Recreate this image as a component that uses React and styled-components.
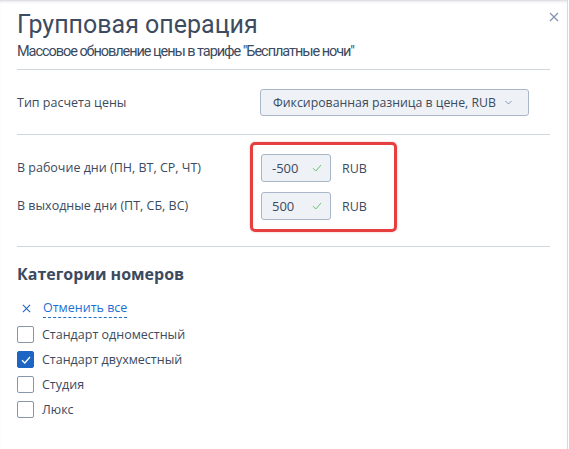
import React from "react";
import styled, { createGlobalStyle } from "styled-components";

const GlobalStyle = createGlobalStyle`
  html, body {
    margin: 0;
    padding: 0;
    background: #ffffff;
  }
  body {
    font-family: "Open Sans", "Noto Sans", sans-serif;
    color: #3b4a5e;
  }
`;

const Modal = styled.div`
  position: relative;
  width: 568px;
  min-height: 449px;
  box-sizing: border-box;
  background: #fff;
  border-right: 1px solid #d3dae4;
  box-shadow: inset 0 3px 3px -2px rgba(60, 70, 90, 0.25);
`;

const Header = styled.div`
  padding: 10px 17px 0 17px;
`;

const Title = styled.h1`
  margin: 0;
  font-family: Roboto, "Liberation Sans", sans-serif;
  font-weight: 400;
  font-size: 25px;
  line-height: 30px;
  color: #3d4b60;
`;

const Subtitle = styled.div`
  margin-top: 2px;
  font-family: Roboto, "Liberation Sans", sans-serif;
  font-size: 14.5px;
  letter-spacing: -1.05px;
  line-height: 20px;
  color: #3b4a5e;
`;

const Close = styled.button`
  position: absolute;
  top: 9px;
  right: 5px;
  width: 16px;
  height: 16px;
  padding: 0;
  border: 0;
  background: none;
  cursor: pointer;
  display: flex;
  align-items: center;
  justify-content: center;
`;

const Divider = styled.hr`
  margin: ${(p) => p.$top || 0}px 17px 0 17px;
  border: 0;
  border-top: 1px solid #cfd6e0;
`;

const Section = styled.div`
  position: relative;
  display: grid;
  grid-template-columns: 243px 1fr;
  row-gap: 10px;
  align-items: center;
  padding: ${(p) => p.$pad};
`;

const Label = styled.div`
  font-size: 12.5px;
  line-height: 18px;
  color: #3b4a5e;
`;

const Select = styled.div`
  width: 269px;
  height: 27px;
  box-sizing: border-box;
  display: flex;
  align-items: center;
  gap: 9px;
  padding: 0 12px 0 12px;
  background: #eef2f6;
  border: 1px solid #a9b6c8;
  border-radius: 3px;
  font-size: 12.3px;
  color: #3b4a5e;
  cursor: pointer;
`;

const PriceControl = styled.div`
  display: flex;
  align-items: center;
  gap: 11px;
  margin-left: 1px;
`;

const Input = styled.div`
  width: 70px;
  height: 28px;
  box-sizing: border-box;
  display: flex;
  align-items: center;
  justify-content: space-between;
  padding: 0 8px 0 10px;
  background: #eef2f6;
  border: 1px solid #a9b6c8;
  border-radius: 3px;
  font-size: 13px;
  color: #3b4a5e;
`;

const Currency = styled.span`
  font-size: 12.5px;
  color: #3b4a5e;
`;

const Highlight = styled.div`
  position: absolute;
  left: 250px;
  top: 7px;
  width: 147px;
  height: 90px;
  box-sizing: border-box;
  border: 3px solid #e5403f;
  border-radius: 5px;
  box-shadow: 0 0 2px rgba(229, 64, 63, 0.4);
  pointer-events: none;
`;

const Categories = styled.div`
  padding: 17px 17px 20px 17px;
`;

const SectionTitle = styled.div`
  font-size: 16px;
  line-height: 20px;
  font-weight: 700;
  color: #3b4a5e;
`;

const ClearAll = styled.div`
  margin-top: 14px;
  height: 20px;
  display: flex;
  align-items: center;
  gap: 12px;
  padding-left: 5px;
`;

const LinkText = styled.span`
  font-size: 12.5px;
  line-height: 18px;
  color: #1d6fd1;
  border-bottom: 1px dashed #1d6fd1;
  cursor: pointer;
`;

const List = styled.div`
  margin-top: 4px;
`;

const Item = styled.label`
  height: 25px;
  display: flex;
  align-items: center;
  gap: 8px;
  font-size: 12.5px;
  color: #3b4a5e;
  cursor: pointer;
`;

const Box = styled.span`
  width: 17px;
  height: 17px;
  box-sizing: border-box;
  border-radius: 2px;
  border: 1px solid ${(p) => (p.$checked ? "#1c65c2" : "#8796ad")};
  background: ${(p) => (p.$checked ? "#1c65c2" : "#fff")};
  display: flex;
  align-items: center;
  justify-content: center;
`;

const Cross = ({ color, size }) => (
  <svg width={size} height={size} viewBox="0 0 10 10">
    <path d="M1 1L9 9M9 1L1 9" stroke={color} strokeWidth="1.2" fill="none" />
  </svg>
);

const Check = ({ color, w, h, sw }) => (
  <svg width={w} height={h} viewBox="0 0 10 8">
    <path d="M1 4.2L3.8 7L9 1" stroke={color} strokeWidth={sw} fill="none" />
  </svg>
);

const Chevron = () => (
  <svg width="7" height="5" viewBox="0 0 7 5">
    <path d="M0.5 1L3.5 4L6.5 1" stroke="#8a9ab0" strokeWidth="1" fill="none" />
  </svg>
);

const prices = [
  { label: "В рабочие дни (ПН, ВТ, СР, ЧТ)", value: "-500" },
  { label: "В выходные дни (ПТ, СБ, ВС)", value: "500" },
];

const rooms = [
  { name: "Стандарт одноместный", checked: false },
  { name: "Стандарт двухместный", checked: true },
  { name: "Студия", checked: false },
  { name: "Люкс", checked: false },
];

const App = () => {
  return (
    <Modal>
      <GlobalStyle />
      <Header>
        <Title>Групповая операция</Title>
        <Subtitle>Массовое обновление цены в тарифе "Бесплатные ночи"</Subtitle>
      </Header>
      <Close>
        <Cross color="#8293ad" size={10} />
      </Close>
      <Divider $top={7} />
      <Section $pad="19px 17px 18px 17px">
        <Label>Тип расчета цены</Label>
        <Select>
          <span>Фиксированная разница в цене, RUB</span>
          <Chevron />
        </Select>
      </Section>
      <Divider />
      <Section $pad="19px 17px 26px 17px">
        {prices.map((p) => (
          <React.Fragment key={p.label}>
            <Label>{p.label}</Label>
            <PriceControl>
              <Input>
                <span>{p.value}</span>
                <Check color="#6cc070" w={10} h={8} sw={1} />
              </Input>
              <Currency>RUB</Currency>
            </PriceControl>
          </React.Fragment>
        ))}
        <Highlight />
      </Section>
      <Divider />
      <Categories>
        <SectionTitle>Категории номеров</SectionTitle>
        <ClearAll>
          <Cross color="#1c65c2" size={9} />
          <LinkText>Отменить все</LinkText>
        </ClearAll>
        <List>
          {rooms.map((r) => (
            <Item key={r.name}>
              <Box $checked={r.checked}>
                {r.checked && <Check color="#fff" w={10} h={8} sw={1.3} />}
              </Box>
              {r.name}
            </Item>
          ))}
        </List>
      </Categories>
    </Modal>
  );
};

export default App;
